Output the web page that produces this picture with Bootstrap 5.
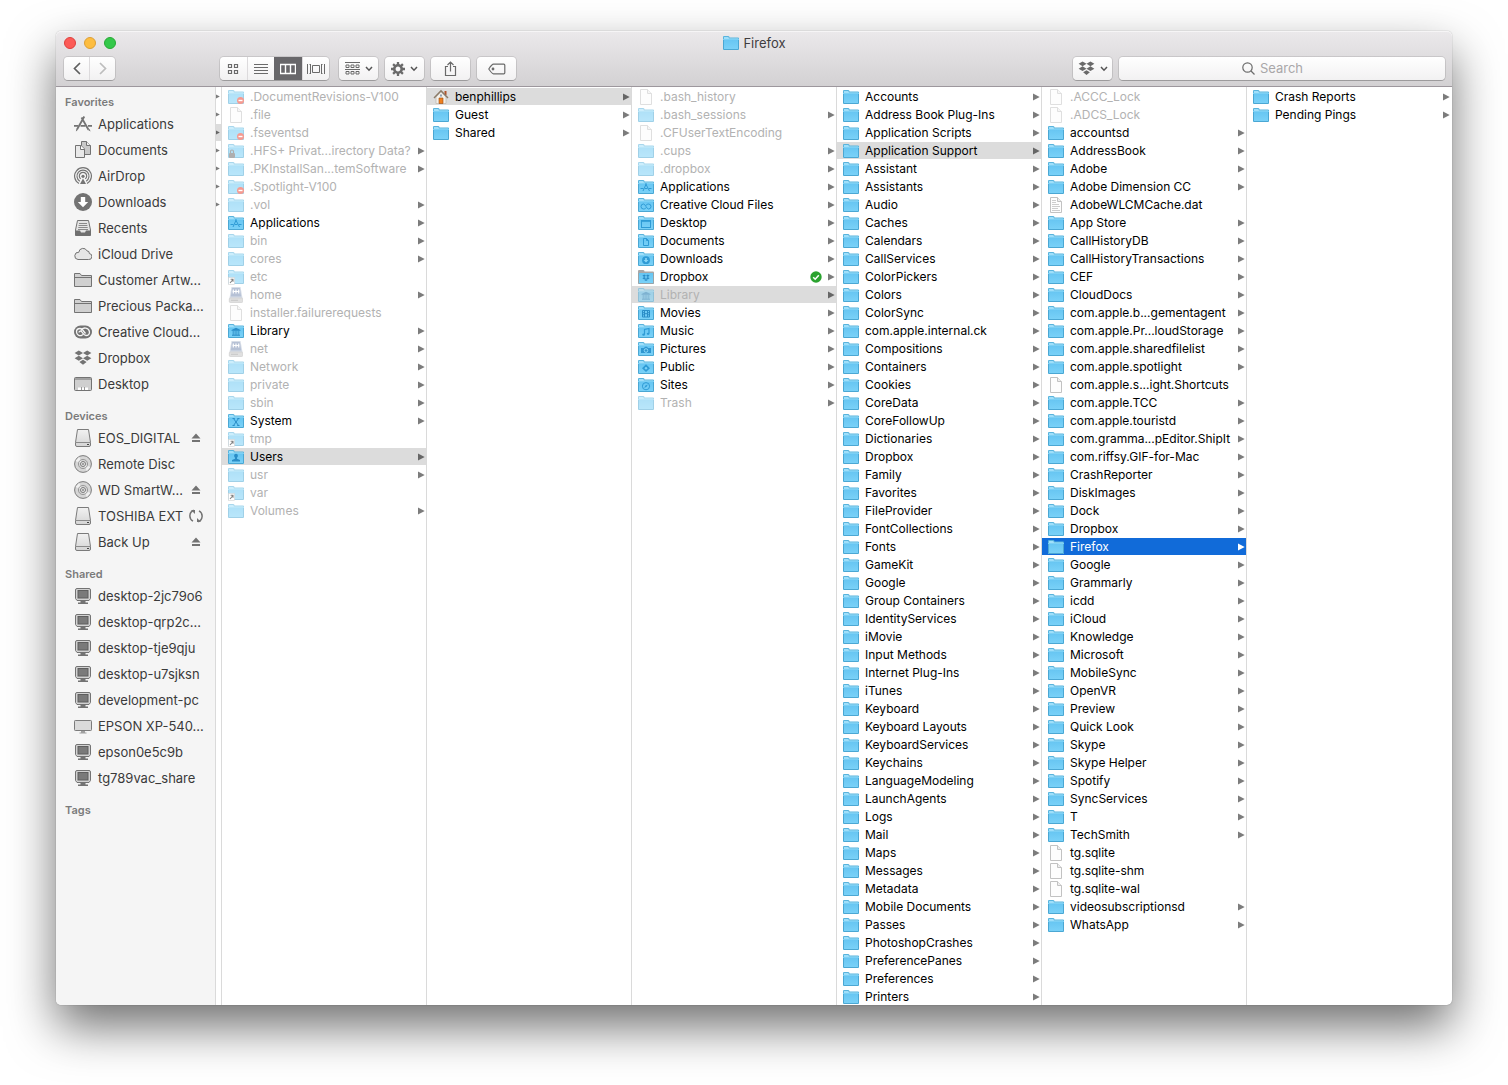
<!DOCTYPE html>
<html lang="en">
<head>
<meta charset="utf-8">
<meta name="viewport" content="width=device-width, initial-scale=1">
<title>Firefox</title>
<link href="https://cdn.jsdelivr.net/npm/bootstrap@5.3.0/dist/css/bootstrap.min.css" rel="stylesheet">
<style>
  body { font-family: Inter, "Liberation Sans", sans-serif; font-size: 12px; line-height: 18px; color: #000; background: #fff; }
  a { color: inherit; text-decoration: none; }
  svg { flex: none; display: block; }
  .finder { margin: 31px 56px 80px; border-radius: 5px; background: #fff;
    box-shadow: 0 0 1px rgba(0,0,0,.5), 0 22px 48px rgba(0,0,0,.56); }
  .finder-bar { height: 56px; padding: 0 7px 6px 8px; border-bottom: 1px solid #9d979d; border-radius: 5px 5px 0 0;
    background: linear-gradient(#ebe9eb, #d3d1d3); box-shadow: inset 0 1px 0 #f6f5f6; }
  .title-row { height: 24px; font-size: 13px; color: #3f3d3f; margin-bottom: 2px; }
  .title-row .side-space { flex: 1 1 0; }
  .light { width: 12px; height: 12px; border-radius: 50%; border: 1px solid; padding: 0; }
  .light-red { background: #fc5b57; border-color: #df3f3c; }
  .light-amber { background: #fdbd40; border-color: #dd9f35; }
  .light-green { background: #34c84a; border-color: #27a934; }
  .tool, .tool-set { height: 23px; border-radius: 4px; background: linear-gradient(#fff, #f2f1f2);
    box-shadow: 0 0 0 1px rgba(0,0,0,.1), 0 1px 0 rgba(0,0,0,.18); border: 0; color: #6a6a6a; }
  .tool { width: 39px; padding: 0; display: flex; align-items: center; justify-content: center; gap: 5px; }
  .tool-set { display: flex; overflow: hidden; }
  .tool-set button { flex: 1; border: 0; padding: 0; background: none; color: inherit; display: flex; align-items: center; justify-content: center; border-left: 1px solid #dcdadc; }
  .tool-set button:first-child { border-left: 0; }
  .tool-set .pressed { background: #68676a; color: #fff; border-color: #68676a; }
  .nav-set { width: 51px; margin-right: 98px; }
  .view-set { width: 109px; margin-right: 3px; }
  .tools { gap: 7px; }
  .search-box { width: 326px; }
  .search-box input { width: 100%; height: 23px; border: 0; border-radius: 4px; background: linear-gradient(#fff, #f2f1f2);
    box-shadow: 0 0 0 1px rgba(0,0,0,.1), 0 1px 0 rgba(0,0,0,.18); font-size: 13px; line-height: 18px; text-align: center; padding: 0 8px 2px 20px; }
  .search-box input::placeholder { color: #a9a7a9; opacity: 1; }
  .search-box svg { position: absolute; top: 5px; left: calc(50% - 40px); pointer-events: none; }
  .side { width: 160px; flex: none; background: #f5f5f5; border-right: 1px solid #dadada; border-radius: 0 0 0 5px; padding: 6px 0 0; color: #3a3a3a; }
  .side h2 { font-size: 11px; line-height: 18px; font-weight: 600; color: #7b7b7b; margin: 0; padding-left: 9px; }
  .side ul { margin-bottom: 10px; }
  .side a { height: 26px; font-size: 13px; padding: 0 12px 0 18px; display: flex; align-items: center; gap: 6px; white-space: nowrap; }
  .side .mark-icon { color: #737373; }
  .side .tail { width: 14px; display: flex; justify-content: center; margin-left: auto; }
  .sliver { width: 6px; flex: none; border-right: 1px solid #dadada; overflow: hidden; }
  .panes { min-width: 0; }
  .pane { flex: 1 1 0; min-width: 0; border-right: 1px solid #dadada; }
  .pane:last-child { border-right: 0; padding-right: 1px; }
  .entry { height: 18px; padding: 0 1px 0 6px; display: flex; align-items: center; gap: 6px; white-space: nowrap; border-top: 1px solid transparent; background-clip: padding-box; line-height: 17px; }
  .entry .arrow { margin-left: auto; color: #7c7c7c; }
  .entry .synced { margin-left: auto; }
  .entry .synced + .arrow { margin-left: 0; }
  .entry.dim { color: #b2b2b2; }
  .entry.dim .kind { opacity: .52; }
  .entry.open { background-color: #dcdcdc; }
  .entry.open .arrow { color: #666; }
  .entry.active { background-color: #116bd9; color: #fff; }
  .entry.active .arrow { color: #fff; }
  .sliver .entry { padding: 0; }
  .sliver .arrow { margin: 0; }
</style>
</head>
<body>

<svg width="0" height="0" class="position-absolute" aria-hidden="true">
  <defs>
    <linearGradient id="blue" x1="0" y1="0" x2="0" y2="1"><stop offset="0" stop-color="#66c5f2"/><stop offset="1" stop-color="#7bd2f8"/></linearGradient>
    <linearGradient id="drive" x1="0" y1="0" x2="0" y2="1"><stop offset="0" stop-color="#f2f2f2"/><stop offset="1" stop-color="#d4d4d4"/></linearGradient>

    <symbol id="folder" viewBox="0 0 16 16">
      <path d="M0 3V2q0-1 1-1h4.300q.6 0 .9.600l.4.900H15q1 0 1 1V5H0z" fill="#59b4dd"/>
      <path d="M1 3V2h4.300l.7 1.500h9V5H1z" fill="#a0dffa"/>
      <path d="M0 4h16v10q0 1-1 1H1q-1 0-1-1z" fill="url(#blue)"/>
      <path d="M.5 4v10q0 .5.500.500h14q.5 0 .5-.500V4" fill="none" stroke="#4ba7d3"/>
      <path d="M0 4.500h16" stroke="#7cd0f5"/>
    </symbol>
    <symbol id="file" viewBox="0 0 16 16">
      <path d="M2.500.5h7l4 4v11h-11z" fill="#fdfdfd" stroke="#c2c2c2"/><path d="M9.500.5v4h4" fill="#eee" stroke="#c2c2c2"/>
    </symbol>
    <symbol id="textfile" viewBox="0 0 16 16"><use href="#file"/>
      <path d="M4 3.500h4M4 5.500h4M4 7.500h7M4 9.500h8M4 11.500h6M4 13.500h8" stroke="#cdcdcd"/></symbol>
    <symbol id="noentry" viewBox="0 0 16 16"><use href="#folder"/><circle cx="12.500" cy="11.500" r="3.500" fill="#ee3f2c"/><path d="M10.500 11.500h4" stroke="#fff" stroke-width="1.400"/></symbol>
    <symbol id="locked" viewBox="0 0 16 16"><use href="#folder"/><rect x="1" y="10" width="6" height="5" rx="1" fill="#666"/><path d="M2.500 10V8.500a1.500 1.500 0 0 1 3 0V10" fill="none" stroke="#666" stroke-width="1.200"/></symbol>
    <symbol id="alias" viewBox="0 0 16 16"><use href="#folder"/><rect x=".5" y="8.500" width="6" height="7" fill="#fff" stroke="#aaa" stroke-width=".6"/><path d="M2 14l3-3.500M2.600 10.300H5v2.500" fill="none" stroke="#111" stroke-width="1.100"/></symbol>
    <symbol id="server" viewBox="0 0 16 16"><path d="M3.500 0h9l2 11h-13z" fill="#b4bfd2"/><path d="M4.200 1h7.600l1.400 8.500H2.800z" fill="#7489b0"/><path d="M5.300 2.500v4M8 2.500v4M10.700 2.500v4M4.500 4.500h7" stroke="#fff" stroke-width="1.200"/><rect x="1.300" y="11" width="13.400" height="4.500" rx="1" fill="#c4c4c4" stroke="#9a9a9a" stroke-width=".6"/><path d="M3 13.300h7" stroke="#8a8a8a" stroke-width=".8"/></symbol>
    <symbol id="house" viewBox="0 0 16 16"><path d="M11.500 2h2v4h-2z" fill="#b3552b"/><path d="M3 8l5-5 5 5v6.500H3z" fill="#f3f0ea" stroke="#b3afa6" stroke-width=".6"/><path d="M1 9l7-7.200L15 9" fill="none" stroke="#8b7b68" stroke-width="1.400"/><path d="M6 9h4v5.500H6z" fill="#ee7f1d" stroke="#9c4c10" stroke-width=".6"/><path d="M7 5.500h2v2H7z" fill="#8fa0b2"/></symbol>
    <symbol id="f-apps" viewBox="0 0 16 16"><use href="#folder"/><path transform="translate(0 -1)" d="M5 13l3.400-7.500M7.500 5.500l4 7.500M2.500 10.500h3M7 10.500h2.500M11 10.500h2.500" fill="none" stroke="#2f9bd5"/></symbol>
    <symbol id="f-cc" viewBox="0 0 16 16"><use href="#folder"/><path transform="translate(0 -.500)" d="M8 11.300c-1 1-1.600 1.200-2.500 1.200a2.500 2.500 0 0 1 0-5c2 0 3 5 5 5a2.500 2.500 0 0 0 0-5c-1 0-1.700.4-2.500 1.300" fill="none" stroke="#2f9bd5"/></symbol>
    <symbol id="f-desktop" viewBox="0 0 16 16"><use href="#folder"/><rect x="3.500" y="5.500" width="9" height="7" fill="none" stroke="#2f9bd5"/><path d="M3 6h10" stroke="#2f9bd5" stroke-width="1.600"/></symbol>
    <symbol id="f-docs" viewBox="0 0 16 16"><use href="#folder"/><path d="M5.500 5.500h3l2 2v5h-5zM8.500 5.500v2h2" fill="none" stroke="#2f9bd5"/></symbol>
    <symbol id="f-down" viewBox="0 0 16 16"><use href="#folder"/><circle cx="8" cy="9.200" r="3.900" fill="#2f9bd5"/><path d="M7.200 6.900h1.600v2h1.600L8 11.500 5.600 8.900h1.600z" fill="#8bd8f8"/></symbol>
    <symbol id="boxes" viewBox="0 0 18 16"><path d="M4.800.5L9 3 4.800 5.500.6 3zM13.200.5L17.400 3l-4.200 2.500L9 3zM4.800 5.700L9 8.200l-4.200 2.500L.6 8.200zM13.200 5.700l4.200 2.500-4.200 2.500L9 8.200zM9 9.800l3.600 2.200L9 14.800 5.400 12z" fill="currentColor"/></symbol>
    <symbol id="f-box" viewBox="0 0 16 16"><path d="M0 3V2q0-1 1-1h4.300q.6 0 .9.600l.4.900H15q1 0 1 1V5H0z" fill="#a8a8a8"/><path d="M0 4h16v10q0 1-1 1H1q-1 0-1-1z" fill="url(#blue)"/><path d="M.5 4v10.500h15V4" fill="none" stroke="#9ba4a8"/><path d="M6.200 5.500L8 6.700 6.200 7.900 4.400 6.700zM9.800 5.500l1.800 1.200-1.800 1.200L8 6.700zM6.200 8L8 9.200l-1.800 1.200-1.800-1.200zM9.800 8l1.800 1.200-1.800 1.200L8 9.200zM8 9.900l1.700 1L8 12l-1.700-1.100z" fill="#2a8cc6"/></symbol>
    <symbol id="f-lib" viewBox="0 0 16 16"><use href="#folder"/><g transform="translate(0 -.500)"><path d="M8 5.300l4.500 2.300v.7h-9v-.7zM4 12.300h8v1H4z" fill="#2a8dc7"/><path d="M5.200 8v4.500M7.100 8v4.500M8.900 8v4.500M10.800 8v4.500" stroke="#2a8dc7" stroke-width=".9"/></g></symbol>
    <symbol id="f-film" viewBox="0 0 16 16"><use href="#folder"/><path transform="translate(0 -1)" d="M4.500 6.500h7v6.500h-7zM6.500 6.500V13M9.500 6.500V13M4 8.700h2.500M4 10.800h2.500M9.500 8.700H12M9.500 10.800H12M6.500 9.700h3" fill="none" stroke="#2a8dc7"/></symbol>
    <symbol id="f-music" viewBox="0 0 16 16"><use href="#folder"/><g transform="translate(0 -.500)"><path d="M6.500 12V7l4.500-1v5" fill="none" stroke="#2f9bd5" stroke-width="1.200"/><ellipse cx="5.600" cy="12.200" rx="1.400" ry="1.100" fill="#2f9bd5"/><ellipse cx="10.100" cy="11.300" rx="1.400" ry="1.100" fill="#2f9bd5"/></g></symbol>
    <symbol id="f-pics" viewBox="0 0 16 16"><use href="#folder"/><g transform="translate(0 -.500)"><path d="M3 7.500h3l1-1.200h2l1 1.200h3v5H3z" fill="#2f96d0"/><circle cx="8" cy="10" r="1.800" fill="none" stroke="#8bd8f8"/></g></symbol>
    <symbol id="f-public" viewBox="0 0 16 16"><use href="#folder"/><path d="M8 5.300l4 3.900-4 3.900-4-3.900z" fill="#2f9bd5"/><circle cx="8" cy="9.200" r="1.200" fill="#7bd2f8"/></symbol>
    <symbol id="f-sites" viewBox="0 0 16 16"><use href="#folder"/><g transform="translate(0 -.500)"><circle cx="8" cy="9.700" r="3.600" fill="none" stroke="#2f9bd5"/><path d="M6.200 11.500l1.200-2.400 2.400-1.200-1.200 2.400z" fill="#2f9bd5"/></g></symbol>
    <symbol id="f-system" viewBox="0 0 16 16"><use href="#folder"/><path transform="translate(0 -.500)" d="M5.500 6l5 7M10.500 6l-5 7M4.500 6h2.300M9.300 6h2.200M4.500 13h2.200M9.200 13h2.300" stroke="#2a8dc7"/></symbol>
    <symbol id="f-users" viewBox="0 0 16 16"><use href="#folder"/><path transform="translate(0 -.500)" d="M8 5.300q1.900 0 1.900 2 0 1.200-.9 2v1l3 1.200v1.500H4v-1.500l3-1.200v-1q-.9-.8-.9-2 0-2 1.900-2z" fill="#2a8dc7"/></symbol>

    <symbol id="arrow" viewBox="0 0 7 8"><path d="M0 .500L6.700 4 0 7.500z" fill="currentColor"/></symbol>
    <symbol id="synced" viewBox="0 0 12 12"><circle cx="6" cy="6" r="5.700" fill="#2ba32f"/><path d="M3.200 6.200l2 2 3.600-4" fill="none" stroke="#fff" stroke-width="1.500"/></symbol>
    <symbol id="chevron" viewBox="0 0 8 6"><path d="M1 1l3 3.200L7 1" fill="none" stroke="#555" stroke-width="1.500"/></symbol>

    <symbol id="s-apps" viewBox="0 0 18 18"><g fill="none" stroke="#737373" stroke-width="1.800"><path d="M10.300 1.500L3 14.500M7.500 2.500L14.500 14.800"/><path d="M0 10.800h4M6.500 10.800h5M14 10.800h4"/></g><path d="M2.200 14l1.500 1-1.800 1.600zM14 15l1.600-1 1 2.600z" fill="#737373"/></symbol>
    <symbol id="s-docs" viewBox="0 0 18 18"><g stroke="#737373"><path d="M7.500.5h5l4 4v9h-9z" fill="#c9c9c9"/><path d="M12.500.5v4h4" fill="#eee"/><path d="M1.500 4.500h5.500l3.500 3.500v8.500h-9z" fill="#e9e9e9"/><path d="M6.500 4.500v4h4" fill="#fff"/></g></symbol>
    <symbol id="s-air" viewBox="0 0 18 18"><g fill="none" stroke="#757575" stroke-width="1.200"><path d="M5 16.500a8.400 8.400 0 1 1 8 0"/><path d="M5.800 14.200a6 6 0 1 1 6.400 0"/><path d="M6.700 11.900a3.700 3.700 0 1 1 4.600 0"/></g><circle cx="9" cy="9.300" r="1.600" fill="#757575"/><path d="M9 11.500l3 5.500H6z" fill="#757575"/></symbol>
    <symbol id="s-down" viewBox="0 0 18 18"><circle cx="9" cy="9" r="9" fill="#737373"/><path d="M6.800 4h4.400v5h3L9 14.300 3.800 9h3z" fill="#fff"/></symbol>
    <symbol id="s-recents" viewBox="0 0 18 18"><path d="M3.500 1.500h11L16.500 11v5.500h-15V11z" fill="#e4e4e4" stroke="#737373"/><path d="M5 4.500h8M4.600 6.500h8.800M4.300 8.500h9.400M4 10.500h10" stroke="#8a8a8a"/><path d="M1.500 11.500h4.500l1 2h4l1-2h4.500V16.500h-15z" fill="#6f6f6f"/></symbol>
    <symbol id="s-cloud" viewBox="0 0 18 18"><path d="M4 14.500h10.500a3 3 0 0 0 .8-6 2.300 2.300 0 0 0-2.300-2.600 4.300 4.300 0 0 0-8.200 1.400A3.600 3.600 0 0 0 4 14.500z" fill="#e6e6e6" stroke="#737373"/></symbol>
    <symbol id="s-folder" viewBox="0 0 18 18"><path d="M.5 15.500v-13h5.500l1.500 2h10v11z" fill="#d0d0d0" stroke="#737373"/><path d="M.5 6.500h17" stroke="#737373"/></symbol>
    <symbol id="s-cc" viewBox="0 0 18 18"><rect x="0" y="2.500" width="18" height="13" rx="6.500" fill="#737373"/><g fill="none" stroke="#f5f5f5" stroke-width="1.300"><path d="M9 11.500l-1.500 1a4 4 0 0 1-5-3.500c0-2 1.500-3.500 3.500-3.500s2.500 1 3.500 2.500l2 2.500"/><path d="M7 7.500a4.500 4.500 0 0 1 8.500 1.500c0 2-1.500 3.500-3.500 3.500s-3-2-4-3.500-3-1-3 .5"/></g></symbol>
    <symbol id="s-desktop" viewBox="0 0 18 18"><rect x=".5" y="2.500" width="17" height="13" rx="1" fill="#cfcfcf" stroke="#737373"/><path d="M1 4h16" stroke="#737373"/><path d="M4 12.500h10V15H4z" fill="#fff"/><path d="M7.500 12v3M10.500 12v3" stroke="#999"/></symbol>
    <symbol id="s-drive" viewBox="0 0 18 18"><path d="M3.500.5h11l2 13v2.500q0 1.500-1.500 1.500H3q-1.500 0-1.500-1.500v-2.500z" fill="url(#drive)" stroke="#7b7b7b"/><path d="M1.500 13.500h15" stroke="#8a8a8a"/><path d="M13 15.500h2" stroke="#444"/></symbol>
    <symbol id="s-disc" viewBox="0 0 18 18"><circle cx="9" cy="9" r="8.400" fill="#d6d6d6" stroke="#7b7b7b"/><path d="M9 9L1.500 6 5 2zM9 9l7.500 3-3.500 4z" fill="#f0f0f0"/><circle cx="9" cy="9" r="4.600" fill="none" stroke="#9a9a9a"/><circle cx="9" cy="9" r="2.500" fill="#e6e6e6" stroke="#7b7b7b"/><circle cx="9" cy="9" r="1" fill="#888"/></symbol>
    <symbol id="s-pc" viewBox="0 0 18 18"><path d="M3 1.500h12q1.500 0 1.500 1.500v8.500L15 13.500H3l-1.500-2V3q0-1.500 1.500-1.500z" fill="#d2d2d2" stroke="#737373"/><rect x="4" y="3.500" width="10" height="7.500" fill="#7a7a7a" stroke="#5e5e5e"/><path d="M6.500 14h5v1.500h-5zM4 15.500h10V17H4z" fill="#737373"/></symbol>
    <symbol id="s-display" viewBox="0 0 18 18"><rect x=".5" y="3.500" width="17" height="10" rx=".8" fill="#dadada" stroke="#7b7b7b"/><path d="M7 14h4v1.500H7zM5.500 15.500h7v1h-7z" fill="#a0a0a0"/></symbol>
    <symbol id="eject" viewBox="0 0 10 10"><path d="M5 .5l4.500 5h-9zM1 7h8v2H1z" fill="#737373"/></symbol>
    <symbol id="sync" viewBox="0 0 14 14"><path d="M4.800 1.300A6 6 0 0 0 4 12.200M9.200 12.700A6 6 0 0 0 10 1.800" fill="none" stroke="#737373" stroke-width="1.500"/><path d="M2 1h4v4zM12 13H8V9z" fill="#737373"/></symbol>
  </defs>
</svg>

<main class="finder">
  <header class="finder-bar">
    <div class="title-row d-flex align-items-center">
      <div class="side-space d-flex gap-2">
        <button class="light light-red" aria-label="Close"></button>
        <button class="light light-amber" aria-label="Minimize"></button>
        <button class="light light-green" aria-label="Zoom"></button>
      </div>
      <div class="d-flex align-items-center gap-1"><svg width="16" height="16"><use href="#folder"/></svg><span>Firefox</span></div>
      <div class="side-space"></div>
    </div>
    <div class="tools d-flex">
      <div class="tool-set nav-set">
        <button aria-label="Back"><svg width="8" height="13" viewBox="0 0 8 13"><path d="M7 1L1.500 6.500 7 12" fill="none" stroke="#5f5f5f" stroke-width="1.700"/></svg></button>
        <button aria-label="Forward"><svg width="8" height="13" viewBox="0 0 8 13"><path d="M1 1l5.500 5.500L1 12" fill="none" stroke="#bdbdbd" stroke-width="1.700"/></svg></button>
      </div>
      <div class="tool-set view-set">
        <button aria-label="Icons"><svg width="12" height="12" viewBox="0 0 12 12" fill="none" stroke="currentColor" stroke-width="1.200"><path d="M1.500 1.500h3v3h-3zM7.500 1.500h3v3h-3zM1.500 7.500h3v3h-3zM7.500 7.500h3v3h-3z"/></svg></button>
        <button aria-label="List"><svg width="14" height="12" viewBox="0 0 14 12" stroke="currentColor"><path d="M0 1.500h14M0 4.500h14M0 7.500h14M0 10.500h14"/></svg></button>
        <button class="pressed" aria-label="Columns"><svg width="16" height="12" viewBox="0 0 16 12" fill="none" stroke="currentColor"><path d="M.5 1.500h15v9H.5zM5.500 1.500v9M10.500 1.500v9" stroke-width="1.400"/></svg></button>
        <button aria-label="Cover Flow"><svg width="18" height="12" viewBox="0 0 18 12" fill="none" stroke="currentColor"><path d="M5.500 2.500h7v7h-7zM.5 1v10M3.500 1v10M2.500 1.500h1M2.500 10.500h1M17.500 1v10M14.500 1v10M14.500 1.500h1M14.500 10.500h1"/></svg></button>
      </div>
      <button class="tool" aria-label="Arrange"><svg width="15" height="13" viewBox="0 0 15 13" fill="none" stroke="currentColor"><path d="M0 .5h15M1 3h3v2.500H1zM6 3h3v2.500H6zM11 3h3v2.500h-3zM0 7.500h15M1 9.500h3V12H1zM6 9.500h3V12H6zM11 9.500h3V12h-3z"/></svg><svg width="8" height="6"><use href="#chevron"/></svg></button>
      <button class="tool" aria-label="Action"><svg width="14" height="14" viewBox="-7 -7 14 14"><circle r="3.700" fill="none" stroke="currentColor" stroke-width="2.600"/><path d="M0-7V-4M0 7V4M-7 0H-4M7 0H4M-4.900-4.900L-3-3M4.900 4.900L3 3M-4.900 4.900L-3 3M4.900-4.900L3-3" stroke="currentColor" stroke-width="2.300"/></svg><svg width="8" height="6"><use href="#chevron"/></svg></button>
      <button class="tool" aria-label="Share"><svg width="13" height="16" viewBox="0 0 13 16" fill="none" stroke="currentColor" stroke-width="1.200"><path d="M4 5.500H1.500v9h10v-9H9M6.500 10.500V1M3.500 4l3-3 3 3"/></svg></button>
      <button class="tool" aria-label="Tags"><svg width="18" height="12" viewBox="0 0 18 12" fill="none" stroke="currentColor" stroke-width="1.200"><path d="M5.500 1.200h10.300q1 0 1 1v7.600q0 1-1 1H5.500Q4 10.800.8 6 4 1.200 5.500 1.200z"/><circle cx="5" cy="6" r=".8"/></svg></button>
      <button class="tool ms-auto" aria-label="Dropbox"><svg width="17" height="15"><use href="#boxes"/></svg><svg width="8" height="6"><use href="#chevron"/></svg></button>
      <div class="search-box position-relative">
        <input type="search" placeholder="Search" aria-label="Search">
        <svg width="13" height="13" viewBox="0 0 13 13" fill="none" stroke="#6d6d6d" stroke-width="1.200"><circle cx="5.500" cy="5.500" r="4.700"/><path d="M9 9l3.500 3.500"/></svg>
      </div>
    </div>
  </header>

  <div class="d-flex">
    <nav class="side" id="side" aria-label="Sidebar"></nav>
    <div class="sliver" id="sliver"></div>
    <div class="panes d-flex flex-grow-1" id="panes"></div>
  </div>
</main>

<script src="https://cdn.jsdelivr.net/npm/bootstrap@5.3.0/dist/js/bootstrap.bundle.min.js"></script>
<script>
  const icon = (id, w, h, cls) => `<svg width="${w}" height="${h}" class="${cls || ''}" aria-hidden="true"><use href="#${id}"/></svg>`;
  const list = (text, draw) => '<ul class="list-unstyled mb-0">' + text.trim().split('\n').map(l => '<li>' + draw(l.trim()) + '</li>').join('') + '</ul>';

  // Sidebar sections: icon | label | optional tail icon
  const sections = {
    Favorites: ['s-apps|Applications', 's-docs|Documents', 's-air|AirDrop', 's-down|Downloads', 's-recents|Recents', 's-cloud|iCloud Drive', 's-folder|Customer Artw...', 's-folder|Precious Packa...', 's-cc|Creative Cloud...', 'boxes|Dropbox', 's-desktop|Desktop'],
    Devices: ['s-drive|EOS_DIGITAL|eject', 's-disc|Remote Disc', 's-disc|WD SmartW...|eject', 's-drive|TOSHIBA EXT|sync', 's-drive|Back Up|eject'],
    Shared: ['s-pc|desktop-2jc79o6', 's-pc|desktop-qrp2c...', 's-pc|desktop-tje9qju', 's-pc|desktop-u7sjksn', 's-pc|development-pc', 's-display|EPSON XP-540...', 's-pc|epson0e5c9b', 's-pc|tg789vac_share'],
    Tags: []
  };
  document.getElementById('side').innerHTML = Object.entries(sections).map(([name, items]) =>
    `<h2>${name}</h2><ul class="list-unstyled">` + items.map(item => {
      const [id, label, tail] = item.split('|');
      const t = tail ? `<span class="tail">${tail === 'sync' ? icon('sync', 14, 14) : icon('eject', 10, 10)}</span>` : '';
      return `<li><a href="#">${icon(id, 18, id === 'boxes' ? 16 : 18, 'mark-icon')}<span>${label}</span>${t}</a></li>`;
    }).join('') + '</ul>').join('');

  document.getElementById('sliver').innerHTML = [0, 0, 1, 0, 0, 0, 0].map(on =>
    `<div class="entry ${on ? 'open' : ''}">${icon('arrow', 4, 5, 'arrow')}</div>`).join('');

  // Column entries: icon, flags (> has children, d dimmed, o open, a active, s synced, - none), name
  const panes = [`
    noentry d .DocumentRevisions-V100
    file d .file
    noentry d .fseventsd
    locked d> .HFS+ Privat...irectory Data?
    folder d> .PKInstallSan...temSoftware
    noentry d .Spotlight-V100
    folder d> .vol
    f-apps > Applications
    folder d> bin
    folder d> cores
    alias d etc
    server d> home
    file d installer.failurerequests
    f-lib > Library
    server d> net
    folder d> Network
    folder d> private
    folder d> sbin
    f-system > System
    alias d tmp
    f-users o> Users
    folder d> usr
    alias d var
    folder d> Volumes`, `
    house o> benphillips
    folder > Guest
    folder > Shared`, `
    file d .bash_history
    folder d> .bash_sessions
    file d .CFUserTextEncoding
    folder d> .cups
    folder d> .dropbox
    f-apps > Applications
    f-cc > Creative Cloud Files
    f-desktop > Desktop
    f-docs > Documents
    f-down > Downloads
    f-box s> Dropbox
    f-lib do> Library
    f-film > Movies
    f-music > Music
    f-pics > Pictures
    f-public > Public
    f-sites > Sites
    folder d> Trash`,
    ['Accounts', 'Address Book Plug-Ins', 'Application Scripts', '*Application Support', 'Assistant', 'Assistants', 'Audio', 'Caches', 'Calendars', 'CallServices', 'ColorPickers', 'Colors', 'ColorSync', 'com.apple.internal.ck', 'Compositions', 'Containers', 'Cookies', 'CoreData', 'CoreFollowUp', 'Dictionaries', 'Dropbox', 'Family', 'Favorites', 'FileProvider', 'FontCollections', 'Fonts', 'GameKit', 'Google', 'Group Containers', 'IdentityServices', 'iMovie', 'Input Methods', 'Internet Plug-Ins', 'iTunes', 'Keyboard', 'Keyboard Layouts', 'KeyboardServices', 'Keychains', 'LanguageModeling', 'LaunchAgents', 'Logs', 'Mail', 'Maps', 'Messages', 'Metadata', 'Mobile Documents', 'Passes', 'PhotoshopCrashes', 'PreferencePanes', 'Preferences', 'Printers']
      .map(n => n[0] === '*' ? 'folder o> ' + n.slice(1) : 'folder > ' + n).join('\n'), `
    file d .ACCC_Lock
    file d .ADCS_Lock
    folder > accountsd
    folder > AddressBook
    folder > Adobe
    folder > Adobe Dimension CC
    textfile - AdobeWLCMCache.dat
    folder > App Store
    folder > CallHistoryDB
    folder > CallHistoryTransactions
    folder > CEF
    folder > CloudDocs
    folder > com.apple.b...gementagent
    folder > com.apple.Pr...loudStorage
    folder > com.apple.sharedfilelist
    folder > com.apple.spotlight
    file - com.apple.s...ight.Shortcuts
    folder > com.apple.TCC
    folder > com.apple.touristd
    folder > com.gramma...pEditor.ShipIt
    folder > com.riffsy.GIF-for-Mac
    folder > CrashReporter
    folder > DiskImages
    folder > Dock
    folder > Dropbox
    folder a> Firefox
    folder > Google
    folder > Grammarly
    folder > icdd
    folder > iCloud
    folder > Knowledge
    folder > Microsoft
    folder > MobileSync
    folder > OpenVR
    folder > Preview
    folder > Quick Look
    folder > Skype
    folder > Skype Helper
    folder > Spotify
    folder > SyncServices
    folder > T
    folder > TechSmith
    file - tg.sqlite
    file - tg.sqlite-shm
    file - tg.sqlite-wal
    folder > videosubscriptionsd
    folder > WhatsApp`, `
    folder > Crash Reports
    folder > Pending Pings`];

  document.getElementById('panes').innerHTML = panes.map(p => '<div class="pane">' + list(p, line => {
    const [, id, flags, name] = line.match(/^(\S+) (\S+) (.*)$/);
    const has = f => flags.includes(f);
    return `<a href="#" class="entry ${has('d') ? 'dim' : ''} ${has('o') ? 'open' : ''} ${has('a') ? 'active' : ''}">` +
      icon(id, 16, 16, 'kind') + `<span>${name}</span>` +
      (has('s') ? icon('synced', 12, 12, 'synced') : '') + (has('>') ? icon('arrow', 7, 8, 'arrow') : '') + '</a>';
  }) + '</div>').join('');

  document.addEventListener('click', e => { if (e.target.closest('a')) e.preventDefault(); });
</script>
</body>
</html>
